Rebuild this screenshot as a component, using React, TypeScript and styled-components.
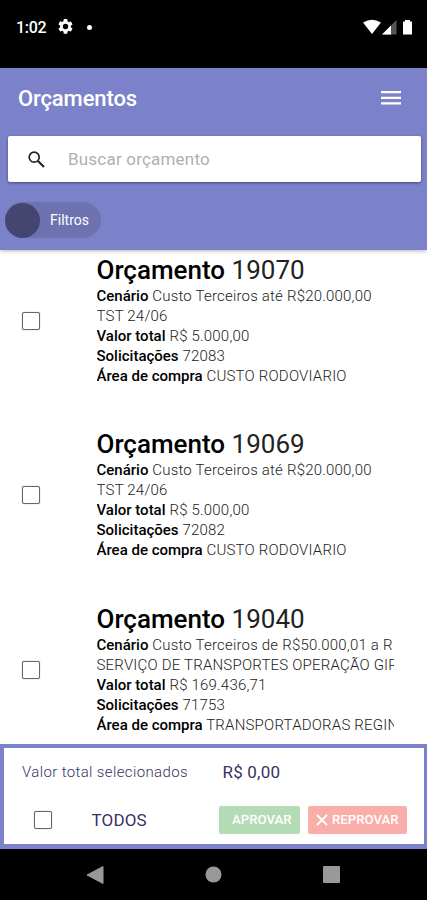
import React from 'react';
import styled, { createGlobalStyle } from 'styled-components';

const GlobalStyle = createGlobalStyle`
  * { box-sizing: border-box; }
  body { margin: 0; background: #000; font-family: Roboto, sans-serif; }
  h1, h2, p { margin: 0; }
`;

const Screen = styled.div`
  width: 427px;
  height: 900px;
  display: flex;
  flex-direction: column;
  overflow: hidden;
  background: #fff;
`;

const StatusBar = styled.div`
  flex: 0 0 68px;
  display: flex;
  align-items: flex-start;
  padding: 18px 14px 0 16px;
  background: #000;
  color: #fff;
`;

const Clock = styled.span`
  width: 42px;
  font-size: 16px;
  line-height: 20px;
  font-weight: 500;
  letter-spacing: -0.3px;
`;

const Dot = styled.span`
  width: 5px;
  height: 5px;
  margin: 7px 0 0 14px;
  border-radius: 50%;
  background: #fff;
`;

const SignalIcons = styled.div`
  display: flex;
  margin-left: auto;
  padding-top: 1px;
`;

const Header = styled.header`
  flex: 0 0 182px;
  display: flex;
  flex-direction: column;
  background: #7c82c9;
  box-shadow: 0 1px 4px rgba(0, 0, 0, 0.3);
  z-index: 1;
`;

const TitleBar = styled.div`
  height: 60px;
  display: flex;
  align-items: center;
  justify-content: space-between;
  padding: 0 26px 0 18px;
`;

const PageTitle = styled.h1`
  color: #fff;
  font-size: 22px;
  font-weight: 500;
  letter-spacing: -0.12px;
`;

const SearchBox = styled.label`
  height: 46px;
  margin: 8px 6px 0 8px;
  display: flex;
  align-items: center;
  padding-left: 20px;
  background: #fff;
  border-radius: 2px;
  box-shadow: 0 1px 3px rgba(40, 40, 70, 0.65);
`;

const SearchInput = styled.input`
  flex: 1;
  margin-left: 23px;
  padding: 0;
  border: 0;
  outline: 0;
  background: transparent;
  font: 400 17px/24px Roboto, sans-serif;
  letter-spacing: 0.2px;
  &::placeholder { color: #b0b0b0; opacity: 1; }
`;

const FilterChip = styled.button`
  width: 96px;
  height: 36px;
  margin: 20px 0 0 5px;
  padding: 0;
  display: flex;
  align-items: center;
  gap: 10px;
  border: 0;
  border-radius: 18px;
  background: #6d72b0;
  color: #fff;
  font: 400 14px/20px Roboto, sans-serif;
`;

const ChipAvatar = styled.span`
  width: 35px;
  height: 35px;
  border-radius: 50%;
  background: #444670;
`;

const List = styled.main`
  flex: 1;
  overflow: hidden;
  padding-top: 4px;
`;

const Row = styled.article`
  height: 174.4px;
  display: flex;
`;

const RowCheck = styled.div`
  width: 96.5px;
  padding: 58px 0 0 22px;
`;

const Checkbox = styled.input`
  appearance: none;
  display: block;
  width: 18px;
  height: 18px;
  margin: 0;
  border: 1.5px solid #666;
  border-radius: 2px;
  background: #fff;
  box-shadow: 0 0 1px #777;
`;

const Details = styled.div`
  width: 297px;
  overflow: hidden;
  white-space: nowrap;
`;

const RowTitle = styled.h2`
  font-size: 26px;
  line-height: 32px;
  font-weight: 400;
  color: #222;
  b { font-weight: 500; color: #000; }
`;

const Line = styled.p`
  font-size: 15px;
  line-height: 20px;
  font-weight: 300;
  color: #222;
  letter-spacing: 0.2px;
  b { font-weight: 500; color: #000; letter-spacing: 0; }
`;

const Footer = styled.footer`
  flex: 0 0 105px;
  border: solid #7c82c9;
  border-width: 4px 3px 5px 4px;
  background: #fff;
  color: #353264;
`;

const TotalRow = styled.div`
  height: 47px;
  display: flex;
  align-items: center;
  padding-left: 18px;
`;

const TotalLabel = styled.span`
  width: 200.5px;
  font-size: 15px;
  font-weight: 300;
  letter-spacing: 0.37px;
`;

const TotalValue = styled.span`
  font-size: 17px;
  letter-spacing: 0.2px;
`;

const ActionsRow = styled.div`
  height: 49px;
  display: flex;
  align-items: center;
  padding-left: 30px;
`;

const AllLabel = styled.span`
  width: 127px;
  margin-left: 39.5px;
  font-size: 17px;
  letter-spacing: 0.15px;
`;

const ActionButton = styled.button<{ $tone: 'approve' | 'reject' }>`
  width: ${p => (p.$tone === 'approve' ? 81 : 99)}px;
  height: 28px;
  margin: 0 8px 0 0;
  padding: 0 8px 0 8px;
  display: flex;
  align-items: center;
  justify-content: ${p => (p.$tone === 'approve' ? 'flex-end' : 'space-between')};
  border: 0;
  border-radius: 2px;
  background: ${p => (p.$tone === 'approve' ? '#b3dcb6' : '#faaea9')};
  color: #fff;
  font: 500 13.2px/20px Roboto, sans-serif;
  white-space: nowrap;
`;

const NavBar = styled.nav`
  flex: 0 0 51px;
  background: #000;
  display: flex;
  align-items: center;
  padding: 0 87px 0 86px;
  justify-content: space-between;
`;

type Quote = { id: string; scenario: string; detail: string; total: string; requests: string; area: string };

const quotes: Quote[] = [
  { id: '19070', scenario: 'Custo Terceiros até R$20.000,00', detail: 'TST 24/06', total: 'R$ 5.000,00', requests: '72083', area: 'CUSTO RODOVIARIO' },
  { id: '19069', scenario: 'Custo Terceiros até R$20.000,00', detail: 'TST 24/06', total: 'R$ 5.000,00', requests: '72082', area: 'CUSTO RODOVIARIO' },
  { id: '19040', scenario: 'Custo Terceiros de R$50.000,01 a R', detail: 'SERVIÇO DE TRANSPORTES OPERAÇÃO GIR', total: 'R$ 169.436,71', requests: '71753', area: 'TRANSPORTADORAS REGIN' },
];

const QuoteRow = ({ quote }: { quote: Quote }) => (
  <Row>
    <RowCheck><Checkbox type="checkbox" aria-label={quote.id} /></RowCheck>
    <Details>
      <RowTitle><b>Orçamento</b> {quote.id}</RowTitle>
      <Line><b>Cenário</b> {quote.scenario}</Line>
      <Line>{quote.detail}</Line>
      <Line><b>Valor total</b> {quote.total}</Line>
      <Line><b>Solicitações</b> {quote.requests}</Line>
      <Line><b>Área de compra</b> {quote.area}</Line>
    </Details>
  </Row>
);

export default function App() {
  return (
    <>
      <GlobalStyle />
      <Screen>
        <StatusBar>
          <Clock>1:02</Clock>
          <svg width="15" height="17" viewBox="2 2 20 20" fill="#fff">
            <path d="M19.14 12.94c.04-.3.06-.61.06-.94 0-.32-.02-.64-.07-.94l2.03-1.58a.5.5 0 0 0 .12-.61l-1.92-3.32a.5.5 0 0 0-.59-.22l-2.39.96a7 7 0 0 0-1.62-.94l-.36-2.54A.5.5 0 0 0 13.92 2h-3.84a.5.5 0 0 0-.47.41l-.36 2.54a7 7 0 0 0-1.62.94l-2.39-.96a.5.5 0 0 0-.59.22L2.74 8.87a.5.5 0 0 0 .12.61l2.03 1.58a7 7 0 0 0 0 1.88l-2.03 1.58a.5.5 0 0 0-.12.61l1.92 3.32c.12.22.37.29.59.22l2.39-.96c.5.38 1.03.7 1.62.94l.36 2.54c.05.24.24.41.48.41h3.84c.24 0 .44-.17.47-.41l.36-2.54a7 7 0 0 0 1.62-.94l2.39.96c.22.08.47 0 .59-.22l1.92-3.32a.5.5 0 0 0-.12-.61zM12 15.6a3.6 3.6 0 1 1 0-7.2 3.6 3.6 0 0 1 0 7.2z" />
          </svg>
          <Dot />
          <SignalIcons>
            <svg width="50" height="16" viewBox="0 0 50 16">
              <path d="M0 3.5Q9 -2 18 3.5L9 15Z" fill="#fff" />
              <path d="M33.5 1V15.5H19Z" fill="#555" />
              <path d="M28 6.5V15.5H19Z" fill="#fff" />
              <path d="M40 2.5h2V1h5v1.5h2v13h-9z" fill="#fff" />
            </svg>
          </SignalIcons>
        </StatusBar>
        <Header>
          <TitleBar>
            <PageTitle>Orçamentos</PageTitle>
            <svg width="20" height="14" viewBox="0 0 20 14" fill="#fff">
              <path d="M0 0h20v2.3H0zM0 5.7h20V8H0zM0 11.3h20v2.3H0z" />
            </svg>
          </TitleBar>
          <SearchBox>
            <svg width="17" height="17" viewBox="0 0 17 17" fill="none" stroke="#222" strokeWidth="1.7">
              <circle cx="6.2" cy="6.2" r="5" />
              <path d="M10 10L16 16" strokeWidth="2.1" />
            </svg>
            <SearchInput placeholder="Buscar orçamento" />
          </SearchBox>
          <FilterChip><ChipAvatar />Filtros</FilterChip>
        </Header>
        <List>{quotes.map(q => <QuoteRow key={q.id} quote={q} />)}</List>
        <Footer>
          <TotalRow>
            <TotalLabel>Valor total selecionados</TotalLabel>
            <TotalValue>R$ 0,00</TotalValue>
          </TotalRow>
          <ActionsRow>
            <Checkbox type="checkbox" aria-label="Todos" />
            <AllLabel>TODOS</AllLabel>
            <ActionButton $tone="approve">APROVAR</ActionButton>
            <ActionButton $tone="reject">
              <svg width="12" height="12" viewBox="0 0 12 12" stroke="#fff" strokeWidth="1.8">
                <path d="M1 1L11 11M11 1L1 11" />
              </svg>
              REPROVAR
            </ActionButton>
          </ActionsRow>
        </Footer>
        <NavBar>
          <svg width="18" height="20" viewBox="0 0 18 20"><path d="M17 1.5v17L1 10z" fill="#999" stroke="#999" strokeLinejoin="round" /></svg>
          <svg width="17" height="17" viewBox="0 0 17 17"><circle cx="8.5" cy="8.5" r="8" fill="#999" /></svg>
          <svg width="17" height="17" viewBox="0 0 17 17"><rect width="17" height="17" rx="1" fill="#999" /></svg>
        </NavBar>
      </Screen>
    </>
  );
}
